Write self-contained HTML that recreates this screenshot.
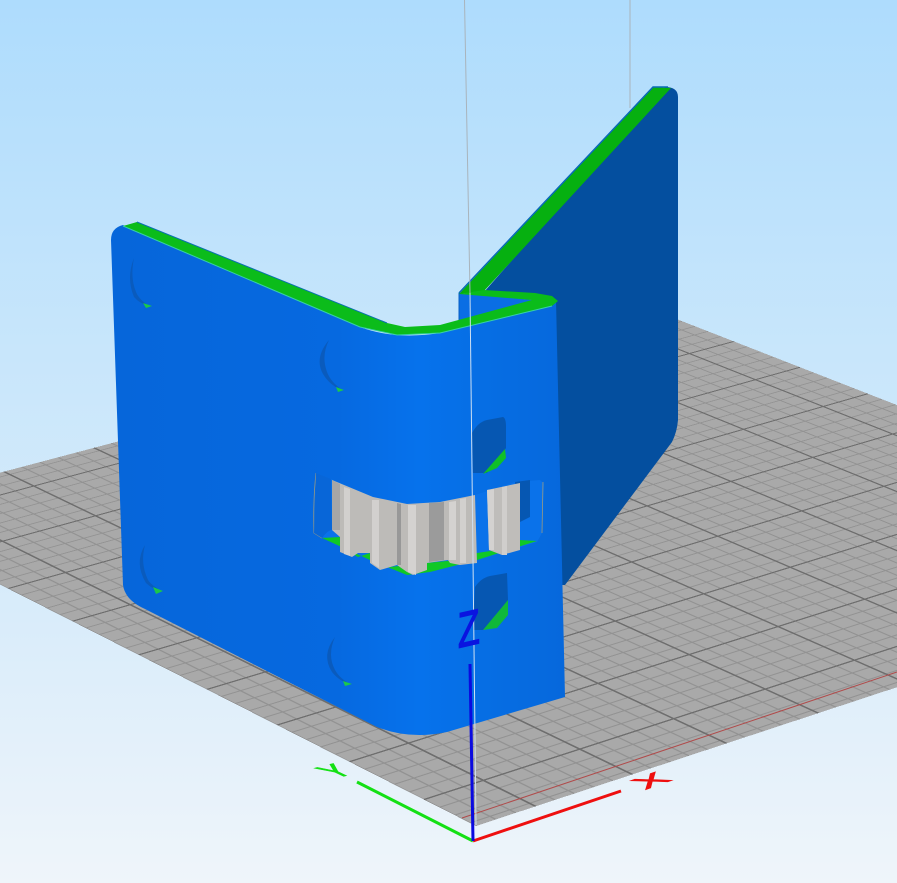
<!DOCTYPE html>
<html><head><meta charset="utf-8"><title>3D print preview</title>
<style>
html,body{margin:0;padding:0;background:#fff}
#w{position:relative;width:897px;height:883px;overflow:hidden;background:linear-gradient(180deg,#aedcfd 0%,#c8e6fb 40%,#d9ecfa 70%,#eff5fa 100%)}
#p{position:absolute;left:0;top:0;width:2000px;height:2000px;transform-origin:0 0;
transform:matrix3d(-.320785,-.121255,0,.00007093,.486765,-.099255,0,.00006227,0,0,1,0,476,826,0,1);
background-color:#a9a9a9;
background-image:linear-gradient(to right,#6e6e6e 5px,transparent 5px),linear-gradient(to bottom,#6e6e6e 5px,transparent 5px),linear-gradient(to right,#929292 4px,transparent 4px),linear-gradient(to bottom,#929292 4px,transparent 4px);
background-size:218px 218px,218px 218px,43.6px 43.6px,43.6px 43.6px;
background-position:146px 0,0 129px,15.2px 0,0 41.8px}
svg{position:absolute;left:0;top:0;display:block}
text{font-family:"Liberation Sans",sans-serif}
</style>
</head><body>
<div id="w">
<div id="p"></div>
<svg xmlns="http://www.w3.org/2000/svg" width="897" height="883" viewBox="0 0 897 883">
<defs>
<linearGradient id="body" x1="110" y1="0" x2="565" y2="0" gradientUnits="userSpaceOnUse">
<stop offset="0" stop-color="#0666da"/><stop offset=".5" stop-color="#0669e0"/><stop offset=".68" stop-color="#0672ec"/><stop offset=".82" stop-color="#066ee4"/><stop offset="1" stop-color="#0668dc"/>
</linearGradient>
</defs>
<line x1="462" y1="818" x2="897" y2="672" stroke="#b04a4a" stroke-width="1"/>

<!-- rear panel -->
<line x1="630" y1="0" x2="630" y2="108" stroke="#aab4bc" stroke-width="1"/>
<path d="M665,87 Q678,87 678,97 L678,420 Q677,432 672,442 L565,585 L540,585 L540,300 L484,292 Z" fill="#044f9f"/>
<!-- main body -->
<path d="M111,240 Q111,228 123,225 L360,327 Q395,340 440,333 L556,300 L565,697 L447,732 Q410,740 377,727 L145,609 Q125,600 123,585 Z" fill="url(#body)"/>
<!-- inner wall -->
<polygon points="459,293 534,300 459,324" fill="#0a6ee4"/>
<polyline points="459,293 459,322" fill="none" stroke="#0a60c4" stroke-width="1"/>
<!-- green top -->
<polygon points="653,87 671,88 484,291 459,294" fill="#06b010"/>
<polygon points="459,294 484,290 535,293 552,296 558,301 552,306 440,333 397,335 360,327 123,226 137,222 387,323 405,327 440,325 532,300" fill="#0bbc1a"/>
<polyline points="459,293 653,87 668,87" fill="none" stroke="#0a6ab8" stroke-width="1.5"/>
<polyline points="137,222 387,323" fill="none" stroke="#0a70b0" stroke-width="1"/>
<polyline points="123,226 360,327 397,335 440,333 552,306" fill="none" stroke="#38d0a8" stroke-width="1"/>

<!-- holes -->
<path d="M134,258 Q126,278 134,297 Q140,304 151,307 Q139,300 136,292 Q130,278 134,258Z" fill="#0a5bbd"/>
<path d="M143,303 L152,306 L146,308Z" fill="#1cc84a"/>
<path d="M329,340 Q314,358 323,374 Q330,386 344,391 Q331,383 327,372 Q321,356 329,340Z" fill="#0a5bbd"/>
<path d="M336,387 L344,390 L338,392Z" fill="#1cc84a"/>
<path d="M145,545 Q134,563 146,583 Q152,589 163,592 Q151,585 148,580 Q140,563 145,545Z" fill="#0a5bbd"/>
<path d="M153,587 L163,591 L156,594Z" fill="#1cc84a"/>
<path d="M335,637 Q321,655 332,672 Q340,682 352,685 Q340,679 335,670 Q327,655 335,637Z" fill="#0a5bbd"/>
<path d="M343,681 L352,684 L345,686Z" fill="#1cc84a"/>

<!-- upper window -->
<path d="M472,433 Q478,422 487,420 L503,417 Q506,418 506,427 L506,448 L487,473 L473,473Z" fill="#0657b2"/>
<polygon points="505,449 506,458 497,468 483,474" fill="#10c028"/>
<!-- lower window -->
<path d="M475,587 Q481,578 490,576 L507,573 L508,600 L498,618 L483,630 L473,630Z" fill="#0657b2"/>
<polygon points="508,600 508,615 497,628 483,630" fill="#10b83a"/>

<!-- slot -->
<path d="M316,473 L331,479 L373,497 L407,503 L440,502 L475,495 L515,482 L540,480 L544,484 L542,533 L537,542 L477,560 L430,572 L407,575 L370,560 L322,538 L314,533 Z" fill="#0a72ea"/>
<path d="M316,473 Q313,500 314,533 L322,538" fill="none" stroke="#9a9a80" stroke-width=".8"/>
<path d="M543,482 L542,533" fill="none" stroke="#9a9a80" stroke-width=".8"/>
<path d="M316,473 L331,479 L332,530 Q328,530 322,538 L314,533 Z" fill="#0866d8"/>
<polygon points="515,482 530,480 530,517 520,522" fill="#0657b2"/>
<polygon points="322,538 340,537 340,547 358,557 370,553 390,567 427,563 457,560 477,553 497,550 520,540 537,541 477,560 430,572 407,575 370,560" fill="#10c825"/>
<!-- gear -->
<polygon points="332,480 373,497 407,504 440,502 475,495 477,563 460,565 450,563 448,560 427,563 427,570 413,575 407,572 397,565 380,570 370,563 370,553 358,553 352,557 340,552 340,537 332,530" fill="#bdbbb8"/>
<polygon points="487,490 520,483 520,550 502,555 489,550" fill="#bfbdba"/>
<polygon points="429,503 444,502 444,560 429,562" fill="#9b9b9b"/>
<polygon points="332,480 340,484 340,530 332,530" fill="#a6a6a6"/>
<polygon points="344,487 350,489 350,556 344,554" fill="#d2d0ce"/>
<polygon points="372,500 379,500 379,568 372,563" fill="#d2d0ce"/>
<polygon points="397,503 401,504 401,565 397,565" fill="#989898"/>
<polygon points="408,505 416,505 416,575 408,572" fill="#d4d2d0"/>
<polygon points="449,502 456,501 456,560 449,560" fill="#d4d2d0"/>
<polygon points="460,499 466,498 466,563 460,563" fill="#d2d0ce"/>
<polygon points="487,490 494,489 494,550 489,550" fill="#d4d2d0"/>
<polygon points="502,487 507,486 507,555 502,555" fill="#d0cecc"/>

<!-- vertical line -->
<line x1="464.5" y1="0" x2="470" y2="293" stroke="#a9b4bc" stroke-width="1"/>
<line x1="470" y1="293" x2="476" y2="825" stroke="#cfe0f2" stroke-width="1"/>

<!-- axes -->
<line x1="473" y1="841" x2="357" y2="782" stroke="#14e014" stroke-width="3"/>
<line x1="473" y1="841" x2="621" y2="791" stroke="#ee0f0f" stroke-width="3"/>
<line x1="470" y1="664" x2="473" y2="841" stroke="#0a0ae0" stroke-width="3"/>
<text font-size="10" fill="#0a14e0" stroke="#0a14e0" stroke-width=".25" transform="matrix(3.6,-.82,.07,4.96,458,648)">Z</text>
<text font-size="10" fill="#ee0f0f" stroke="#ee0f0f" stroke-width=".3" transform="matrix(4.2,-1.5,2.37,1.26,645,790)">X</text>
<text font-size="10" fill="#14e014" stroke="#14e014" stroke-width=".3" transform="matrix(3,-.75,3.07,1.47,335,778.5)">Y</text>
</svg>
</div>
</body></html>
